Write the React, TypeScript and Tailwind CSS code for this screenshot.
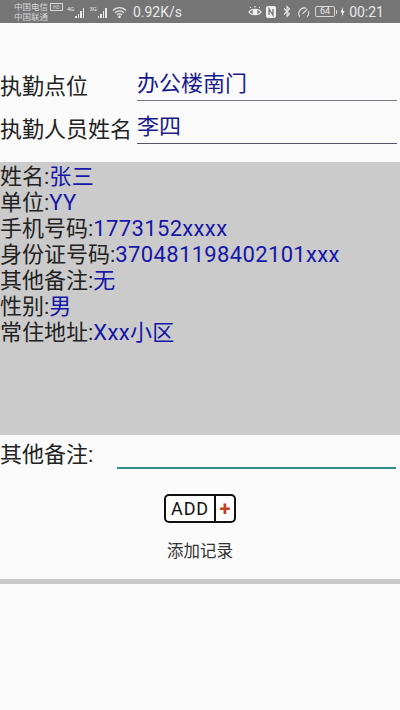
const font = '[font-family:Roboto,"Noto_Sans_CJK_SC",sans-serif]'

const rows = [
  ['姓名:', '张三'],
  ['单位:', 'YY'],
  ['手机号码:', '1773152xxxx'],
  ['身份证号码:', '370481198402101xxx'],
  ['其他备注:', '无'],
  ['性别:', '男'],
  ['常住地址:', 'Xxx小区'],
]

function Bars({ label }: { label: string }) {
  return (
    <div className="flex items-end h-[12px]">
      <span className="text-[6px] leading-[6px] self-start mr-px">{label}</span>
      <span className="flex items-end gap-px">
        <span className="w-[1.5px] h-[2px] bg-[#e8e8e8]" />
        <span className="w-[1.5px] h-[4px] bg-[#e8e8e8]" />
        <span className="w-[1.5px] h-[7px] bg-[#e8e8e8]" />
        <span className="w-[1.5px] h-[10px] bg-[#e8e8e8]" />
      </span>
    </div>
  )
}

function StatusBar() {
  return (
    <div className="h-[23px] bg-[#757575] text-[#e8e8e8] flex items-center pl-[14px] pr-[16px] shrink-0">
      <div className="text-[8.500px] leading-[10px] w-[52px] text-[#d8d8d8] whitespace-nowrap">
        <div className="flex items-center gap-[2px]">
          中国电信
          <span className="text-[5px] leading-[6px] border border-[#d8d8d8] px-[2px]">HD</span>
        </div>
        <div>中国联通</div>
      </div>
      <div className="flex items-center gap-[5px] ml-px">
        <Bars label="4G" />
        <Bars label="3G" />
        <svg width="15" height="12" viewBox="0 0 15 12" fill="none" stroke="#e8e8e8" strokeWidth="1.2">
          <path d="M1 4.5a9 9 0 0 1 13 0" />
          <path d="M3 6.8a6.2 6.2 0 0 1 9 0" />
          <path d="M5 9a3.4 3.4 0 0 1 5 0" />
          <circle cx="7.5" cy="10.8" r="0.7" fill="#e8e8e8" />
        </svg>
      </div>
      <span className="text-[14px] leading-none ml-[6px]">0.92K/s</span>
      <div className="ml-auto flex items-center">
        <svg width="14" height="11" viewBox="0 0 14 11" fill="none" stroke="#f0f0f0" strokeWidth="1.4">
          <path d="M1 6c2-3.500 10-3.500 12 0-2 3.500-10 3.500-12 0z" />
          <circle cx="7" cy="6" r="1.800" fill="#f0f0f0" />
          <path d="M3 2 2 .8M7 1.500V0M11 2l1-1.200" strokeWidth="1" />
        </svg>
        <svg className="ml-[4px]" width="10" height="12" viewBox="0 0 10 12">
          <rect x="0" y="0" width="10" height="12" rx="2" fill="#f0f0f0" />
          <path d="M3 9V3l4 6V3" fill="none" stroke="#757575" strokeWidth="1.300" />
        </svg>
        <svg className="ml-[7px]" width="8" height="13" viewBox="0 0 8 13" fill="none" stroke="#e8e8e8" strokeWidth="1.100">
          <path d="M1 3.500 6.500 9 4 11.500v-10L6.500 4 1 9.500" />
        </svg>
        <svg className="ml-[6px]" width="13" height="12" viewBox="0 0 14 12" fill="none" stroke="#e8e8e8" strokeWidth="1.200">
          <path d="M3 11A6 6 0 0 1 10 2" />
          <path d="M12.500 5A6 6 0 0 1 11 11" />
          <path d="M6 8l5-5" />
        </svg>
        <div className="ml-[5px] w-[20px] h-[11px] border border-[#d8d8d8] rounded-[2px] text-[9px] leading-[9px] text-center">
          64
        </div>
        <span className="w-px h-[4px] bg-[#d8d8d8] ml-px" />
        <svg className="ml-[3px]" width="5" height="10" viewBox="0 0 5 10">
          <path d="M3 0 .5 5.500H2L1.800 10 4.500 4H3z" fill="#f0f0f0" />
        </svg>
        <span className="text-[14px] leading-none ml-[4px]">00:21</span>
      </div>
    </div>
  )
}

function Field({ label, value, line }: { label: string; value: string; line: string }) {
  return (
    <div className="flex items-end">
      <div className="w-[137px] shrink-0 text-[22px] leading-[28px] text-[#222] whitespace-nowrap">{label}</div>
      <div className={`ml-auto w-[260px] mr-[3px] border-b ${line} text-[22px] leading-[30px] text-[#1a1a8c] pb-[1px]`}>
        {value}
      </div>
    </div>
  )
}

export default function App() {
  return (
    <div className={`${font} w-[400px] h-[710px] bg-[#fafafa] flex flex-col overflow-hidden`}>
      <StatusBar />
      <div className="pt-[46px] flex flex-col gap-[11px]">
        <Field label="执勤点位" value="办公楼南门" line="border-[#77777f]" />
        <Field label="执勤人员姓名" value="李四" line="border-[#55556a]" />
      </div>
      <div className="mt-[18px] h-[273px] bg-[#cbcbcb] pt-[2px] shrink-0">
        {rows.map(([k, v]) => (
          <div key={k} className="h-[26px] text-[22px] leading-[26px] text-[#222] whitespace-nowrap">
            {k}
            <span className="text-[#1616a8] tracking-[0.35px]">{v}</span>
          </div>
        ))}
      </div>
      <div className="flex items-end h-[34px] shrink-0">
        <div className="w-[117px] shrink-0 text-[22px] leading-[28px] text-[#222]">其他备注:</div>
        <div className="w-[279px] h-[2px] bg-[#2f8f86]" />
      </div>
      <div className="flex flex-col items-center pt-[25px]">
        <div className="w-[72px] h-[29px] border-2 border-[#111] rounded-[5px] flex items-stretch bg-white">
          <span className="flex-1 flex items-center justify-center text-[18px] leading-none tracking-[0.8px] text-[#111]">ADD</span>
          <span className="w-[20px] border-l-2 border-[#111] flex items-center justify-center text-[20px] leading-none font-bold text-[#c8401f]">+</span>
        </div>
        <div className="mt-[19px] text-[16.500px] leading-[20px] text-[#333]">添加记录</div>
      </div>
      <div className="mt-[17px] h-[5px] bg-[#c9c9c9] shrink-0" />
    </div>
  )
}
